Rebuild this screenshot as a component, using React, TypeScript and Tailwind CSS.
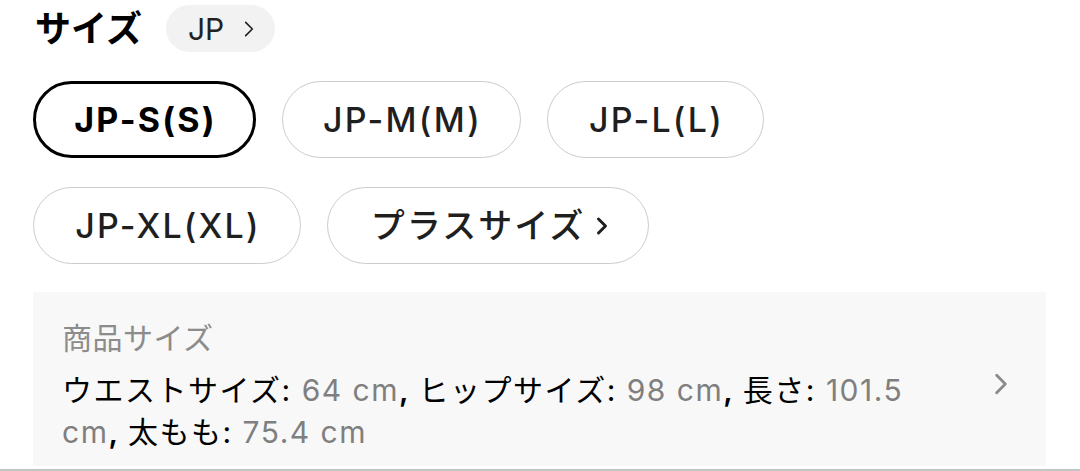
const sizes = [
  { label: "JP-S(S)", w: "w-[223px]", selected: true },
  { label: "JP-M(M)", w: "w-[239px]" },
  { label: "JP-L(L)", w: "w-[217px]" },
  { label: "JP-XL(XL)", w: "w-[268px]" },
];

const measures = [
  { name: "ウエストサイズ", value: "64 cm" },
  { name: "ヒップサイズ", value: "98 cm" },
  { name: "長さ", value: "101.5", rest: "cm" },
  { name: "太もも", value: "75.4 cm" },
];

function Chevron({ className, stroke }: { className: string; stroke: number }) {
  return (
    <svg viewBox="0 0 16 24" className={className} fill="none" stroke="currentColor" strokeWidth={stroke} strokeLinecap="round" strokeLinejoin="round">
      <polyline points="4,4 12,12 4,20" />
    </svg>
  );
}

export default function App() {
  return (
    <div
      className="h-[471px] w-[1080px] overflow-hidden bg-white text-[#1a1a1a]"
      style={{ fontFamily: 'Inter, "Noto Sans CJK JP", sans-serif' }}
    >
      <div className="flex h-[471px] flex-col border-b-2 border-[#c4c4c4] pl-[33px] pr-[34px]">
        {/* 見出し */}
        <div className="mt-[5px] flex items-center">
          <h2 className="ml-[2px] text-[36px] font-bold leading-none text-black">サイズ</h2>
          <button className="ml-[24px] flex h-[47px] w-[109px] items-center gap-[18px] rounded-full bg-[#f2f2f2] pl-[22px] text-[30px] leading-none text-[#222]">
            JP
            <Chevron className="h-[20px] w-[14px]" stroke={2} />
          </button>
        </div>

        {/* サイズ選択 */}
        <div className="mt-[29px] flex w-[760px] flex-wrap gap-x-[26px] gap-y-[29px]">
          {sizes.map((s) => (
            <button
              key={s.label}
              className={`flex h-[77px] ${s.w} items-center justify-center rounded-full pl-[2px] text-[34px] leading-none tracking-[2.2px] ${
                s.selected
                  ? "border-[3px] border-black font-bold text-black"
                  : "border-[1.5px] border-[#cccccc] font-medium text-[#1f1f1f]"
              }`}
            >
              {s.label}
            </button>
          ))}
          <button className="flex h-[77px] w-[322px] items-center justify-center gap-[10px] rounded-full border-[1.5px] border-[#cccccc] pl-[4px] text-[34px] font-medium leading-none tracking-[2px] text-[#1f1f1f]">
            プラスサイズ
            <Chevron className="h-[24px] w-[14px]" stroke={3.4} />
          </button>
        </div>

        {/* 商品サイズ */}
        <div className="mt-[28px] flex h-[174px] bg-[#f8f8f8] pl-[29px] pr-[36px]">
          <div className="flex-1 pt-[25px]">
            <p className="text-[30px] leading-[42px] tracking-[0.5px] text-[#8c8c8c]">商品サイズ</p>
            <p className="mt-[10px] text-[30px] leading-[42px] tracking-[1.5px] text-black">
              {measures.map((m, i) => (
                <span key={m.name}>
                  {m.name}: <span className="text-[#7f7f7f]">{m.value}</span>
                  {m.rest && (
                    <>
                      <br />
                      <span className="text-[#7f7f7f]">{m.rest}</span>
                    </>
                  )}
                  {i < measures.length - 1 && <span className="font-semibold">, </span>}
                </span>
              ))}
            </p>
          </div>
          <Chevron className="mt-[79px] h-[26px] w-[18px] text-[#8a8a8a]" stroke={2.6} />
        </div>
      </div>
    </div>
  );
}
